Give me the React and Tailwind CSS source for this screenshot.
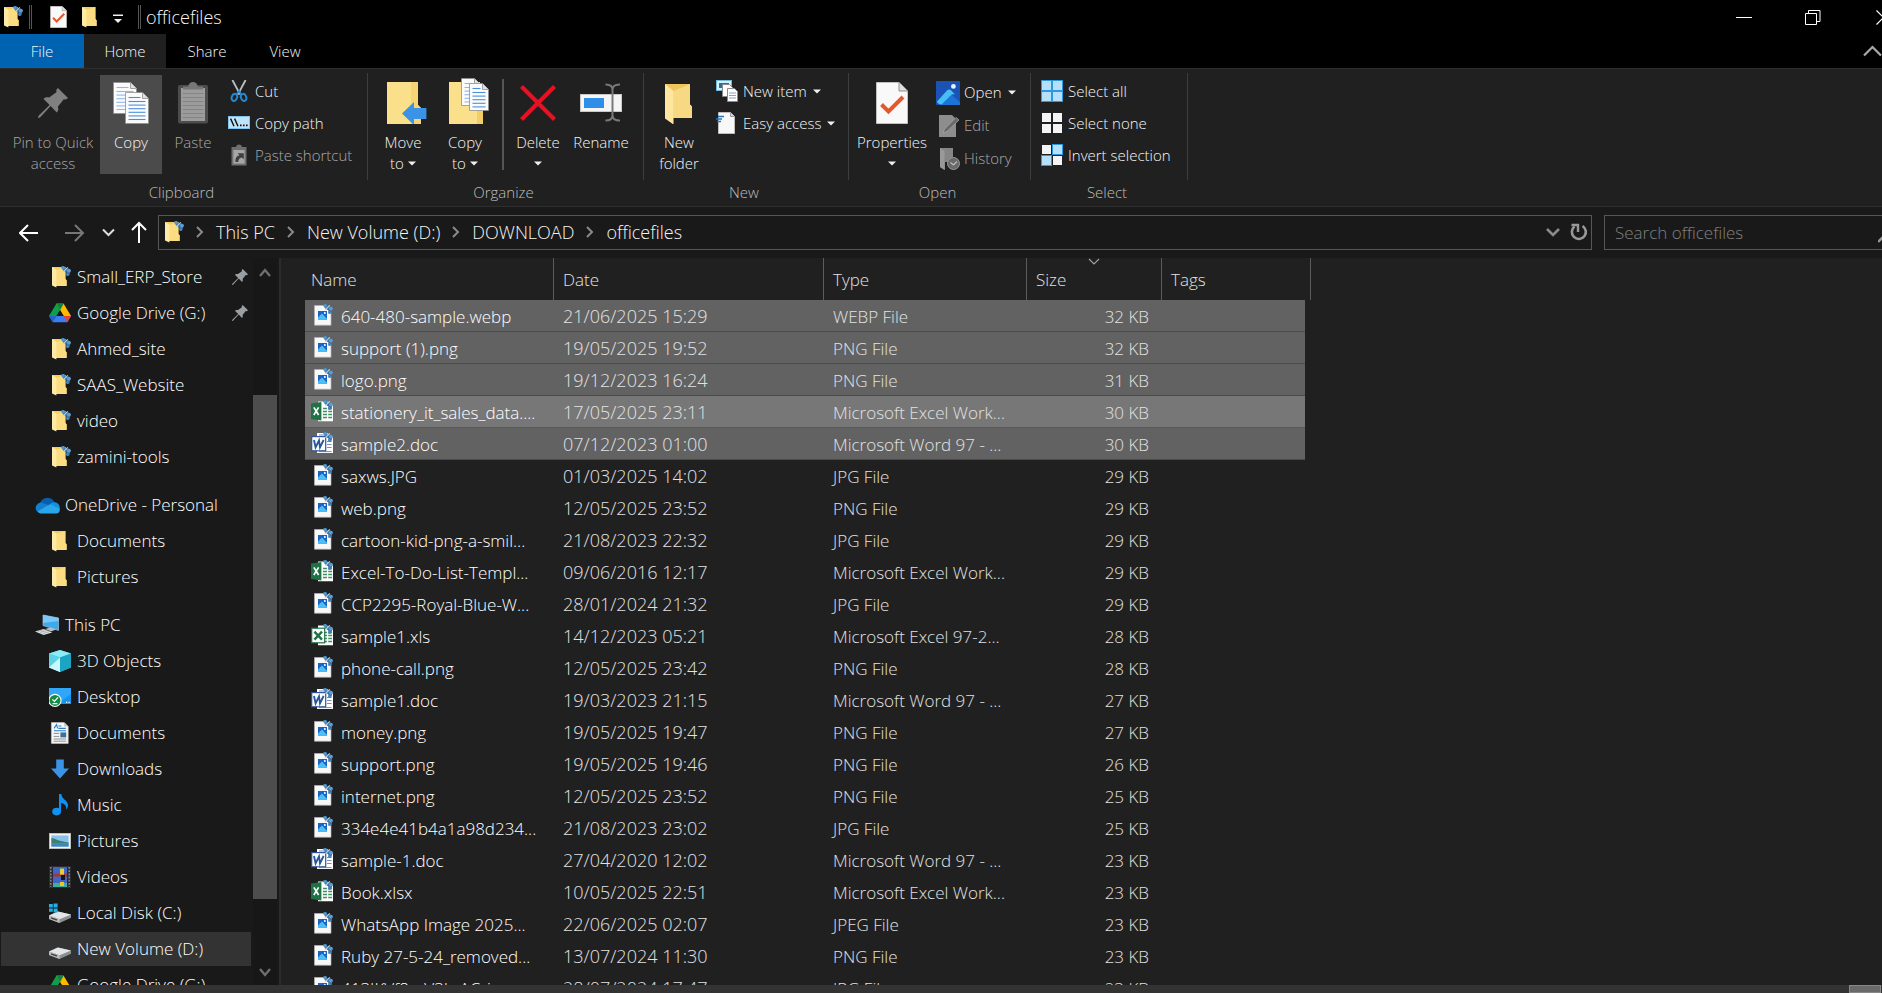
import React from "react";

/* ---------- icons ---------- */

function Svg({ w = 22, h = 22, vb, children, className = "" }) {
  return (
    <svg
      width={w}
      height={h}
      viewBox={vb || `0 0 ${w} ${h}`}
      fill="none"
      aria-hidden="true"
      className={`shrink-0 ${className}`}
    >
      {children}
    </svg>
  );
}

function Badge() {
  return (
    <g>
      <path d="M12 .6l3-.6 1.4 2.6 3.4 0 2 2-1.6 4.8-2.6-.4-.4-2.8-3-1.6z" fill="#3f6f9c" />
      <circle cx="14.2" cy="1.8" r="1.7" fill="#4f97cf" />
      <circle cx="19.9" cy="4.6" r="1.9" fill="#5b9fd6" />
      <circle cx="18.6" cy="8.4" r="1.5" fill="#4a86b8" />
      <path d="M14.4 5.6l4.4-4.2" stroke="#b9d6ec" strokeWidth="1.1" />
    </g>
  );
}

function Folder({ badge }) {
  return (
    <Svg>
      <path d="M3 1h13.4v12l1.2 1.2V20H7z" fill="#f3cd62" />
      <path d="M7 4l9.4-3v12l1.2 1.2V20H7z" fill="#fbdc80" />
      <path d="M3 1l4.4 2.6V21.6L3 19.4z" fill="#ffe9a6" />
      {badge && <Badge />}
    </Svg>
  );
}

function ImageFile() {
  return (
    <Svg>
      <path d="M3.5 1.5h10.2L20 7v14.2H3.5z" fill="#f8f8f8" stroke="#b4b4b4" strokeWidth=".7" />
      <rect x="7" y="7" width="9" height="8.6" fill="#1a62c4" />
      <path d="M7 13.4l4-3.8 5 5.2v.8H7z" fill="#4cc0f6" />
      <circle cx="13.8" cy="9" r="1" fill="#fff" />
      <Badge />
    </Svg>
  );
}

function ExcelFile({ old }) {
  return (
    <Svg>
      <path d="M7 1.5h9L22 5v16.2H7z" fill="#fff" />
      {[8, 11, 14, 17].map((y) => (
        <path key={y} d={`M12 ${y + 0.5}h4M17.2 ${y + 0.5}h3.8`} stroke="#3f8f60" strokeWidth="1.3" />
      ))}
      {old ? (
        <g>
          <rect x=".7" y="4.2" width="13" height="14.6" fill="#fff" stroke="#1f7244" strokeWidth="1.2" />
          <path d="M3.4 7.6l7.6 8M11 7.6l-7.6 8" stroke="#1f7244" strokeWidth="2.4" />
        </g>
      ) : (
        <g>
          <path d="M0 3.6L10.4 2v18.6L0 19z" fill="#1f7244" />
          <path d="M2.8 7.4l4.8 7.6M7.6 7.4l-4.8 7.6" stroke="#fff" strokeWidth="1.7" />
        </g>
      )}
      <Badge />
    </Svg>
  );
}

function WordFile() {
  return (
    <Svg>
      <path d="M6 1h10l6 4v16H6z" fill="#fff" />
      <path d="M8 3h6M16 9.5h4.6M16 12.5h4.6M16 15.5h4.6M8 19.6h12.6" stroke="#7d8fb5" strokeWidth="1" />
      <rect x=".7" y="4.6" width="14" height="14.2" fill="#fff" stroke="#2b569a" strokeWidth="1.2" />
      <path d="M3 8l1.6 7.4L8 8.4l1 7L12.6 8" stroke="#2b569a" strokeWidth="1.9" />
      <Badge />
    </Svg>
  );
}

function GoogleDrive() {
  return (
    <Svg vb="0 0 24 22">
      <path d="M8 1h8l-4 7-7.6 13L0 14.4z" fill="#0da04c" />
      <path d="M8 1h8l8 13.4h-8z" fill="#ffba00" />
      <path d="M8 1l4 7 4-7z" fill="#11833c" />
      <path d="M4 21l4-6.6h16L20 21z" fill="#3c7df0" />
      <path d="M16 14.4h8L20 21z" fill="#ea4335" />
      <path d="M0 14.4h8L4 21z" fill="#2460d8" />
      <path d="M12 8l4 6.4H8z" fill="#191919" />
    </Svg>
  );
}

function OneDrive() {
  return (
    <Svg w={25} h={17}>
      <path d="M5 6.5A7.6 7.6 0 0 1 18.6 4 6 6 0 0 1 20 6L9 12z" fill="#0a5cad" />
      <path d="M1 13a5.6 5.6 0 0 1 5-7.4L16 9l-8 6.5H4A5 5 0 0 1 1 13z" fill="#1180d3" />
      <path d="M14 8.4A6.5 6.5 0 0 1 20 5.3a5.6 5.6 0 0 1 4.6 7z" fill="#1591e0" />
      <path d="M2.4 14.6L13.6 8c2.4-1.4 4 .6 6 1.4l5 2.2c.8 2.8-1 4.9-3.4 4.9H5.6a5 5 0 0 1-3.2-1.9z" fill="#28a8ea" />
    </Svg>
  );
}

function ThisPC() {
  return (
    <Svg w={25} h={22}>
      <path d="M8 1l15.5 3v12.4L8 11.6z" fill="#3fa9f0" />
      <path d="M8 1l15.5 3v3L8 9z" fill="#7cc8f8" />
      <path d="M8 1l15.5 3v12.4L8 11.6z" stroke="#9fc4dc" strokeWidth=".7" />
      <path d="M10 15l6-1.4 5 2-5 2z" fill="#b8bcc0" />
      <path d="M0 17.4l8.6-2.4 8.6 3.4L8.6 21z" fill="#dcdfe2" />
      <path d="M2.4 17.4l6.6-1.6M5 18.4l7-1.8M7.6 19.6l6.4-1.8" stroke="#9aa0a6" strokeWidth=".7" />
    </Svg>
  );
}

function Cube() {
  return (
    <Svg>
      <path d="M11 0l11 3.4v14L11 22 0 17.4v-14z" fill="#36c6dd" />
      <path d="M11 0l11 3.4-11 4L0 3.4z" fill="#8eeaf4" />
      <path d="M0 3.4l11 4V22L0 17.4z" fill="#5bd3e4" />
      <path d="M0 17.4l11-10V22z" fill="#c9f7fb" />
      <path d="M22 3.4l-11 4V22l11-4.6z" fill="#1ba4c4" />
    </Svg>
  );
}

function Desktop() {
  return (
    <Svg>
      <rect x="0" y="2" width="22" height="16" fill="#1595f0" />
      <path d="M0 2h22v6L8 18H0z" fill="#2fa6f8" />
      <path d="M17 16.4h1.2M19.4 16.4h1.2" stroke="#fff" strokeWidth="1.2" />
      <circle cx="6" cy="14.4" r="6.6" fill="#fff" />
      <circle cx="6" cy="14.4" r="5.5" fill="#188a48" />
      <path d="M3.4 13.4l2 2 3.6-4M3.6 17.6h4.8" stroke="#fff" strokeWidth="1.2" />
    </Svg>
  );
}

function DocumentsIcon() {
  return (
    <Svg>
      <path d="M2.4.6h12.8l4 4v16.8H2.4z" fill="#f7f7f7" stroke="#c9c9c9" strokeWidth=".6" />
      <path d="M15.2.6v4h4z" fill="#c4c8cc" />
      <path d="M5 6.4L7.6 2.6 8.6 6.4M9.4 4h3M9.4 6.4h7.4M5 8.8h12" stroke="#2a7fc8" strokeWidth="1.1" />
      <rect x="11.4" y="10.4" width="5.8" height="5" fill="#38719e" />
      <path d="M4.6 11.4h5.6M4.6 14.4h5.6M4.6 17h12.6M4.6 19.2h12.6" stroke="#8e8e8e" strokeWidth="1" />
    </Svg>
  );
}

function DownloadArrow() {
  return (
    <Svg>
      <path d="M7.2 1.4h7.6v9.2H20L11 20.4 2 10.6h5.2z" fill="#3b93e6" />
    </Svg>
  );
}

function MusicNote() {
  return (
    <Svg>
      <ellipse cx="7.6" cy="17.6" rx="4.4" ry="3.8" fill="#1190f0" />
      <path d="M10 0h2.4c0 5 6.6 6.4 6.6 11 0 2-.6 3.4-1.6 4.6 0-4-1.6-5.8-5.4-6.6v9H10z" fill="#1190f0" />
    </Svg>
  );
}

function PicturesIcon() {
  return (
    <Svg>
      <rect x=".5" y="3.5" width="21" height="15" fill="#f4f4f4" stroke="#bdbdbd" />
      <rect x="2.4" y="5.4" width="17.2" height="11.2" fill="#8ac2ee" />
      <path d="M2.4 8c3 0 8 3.6 17.2 4.4v1.4H2.4z" fill="#3f7f6e" />
      <path d="M2.4 13.6h17.2v3H2.4z" fill="#3f86bd" />
    </Svg>
  );
}

function VideosIcon() {
  return (
    <Svg>
      <rect width="22" height="22" fill="#2b2b33" />
      <rect x="4" y="1" width="14" height="20" fill="#3f66c6" />
      <rect x="4" y="7.6" width="14" height="3" fill="#a33636" />
      <rect x="11" y="2.6" width="4" height="6" fill="#e8cf2e" />
      <rect x="4" y="17" width="14" height="4" fill="#3fae9a" />
      <rect x="11" y="16" width="4" height="4" fill="#f3c223" />
      <rect x="12" y="9" width="4" height="5" fill="#16161d" />
      <path d="M1.8 1v20M20.2 1v20" stroke="#8d8d94" strokeWidth="1.4" strokeDasharray="1.8 1.4" />
    </Svg>
  );
}

function Disk({ win }) {
  return (
    <Svg>
      <path d="M0 13.6l8.6-4.2L22 12.4v3.4L10.6 21 0 17z" fill="#8d8f91" />
      <path d="M0 13.4l9-4 13 3-11.4 4.8z" fill="#e4e5e6" />
      <path d="M0 13.4l10.6 3.8V21L0 17z" fill="#b9bbbd" />
      <path d="M2 15.8l6 2.2" stroke="#454545" strokeWidth="1.4" />
      {win && (
        <path d="M0 2h3.8v3.4H0zM4.6 1.4h4v4h-4zM0 6.4h3.8v3.4H0zM4.6 6.4h4v4h-4z" fill="#22b0e6" />
      )}
    </Svg>
  );
}

function Pin({ size = 16, color = "#9a9fa3" }) {
  return (
    <Svg w={size} h={size} vb="0 0 30 30">
      <path
        d="M20 0l10 10-2.2 1.6-2-.4-6 7.6c1 2.2.6 4-1 5.6L12.6 18 2 29.6.4 30 0 29.4l.6-1.6L11.6 17 5.4 10.8c1.6-1.6 3.6-2 5.8-1.2L18.6 4 18.2 2z"
        fill={color}
      />
    </Svg>
  );
}

function Page({ x, y, w, h, line = "#4b8fdc" }) {
  const rows = [];
  for (let i = y + 9; i < y + h - 3; i += 3.6) rows.push(i);
  return (
    <g>
      <path d={`M${x} ${y}h${w - 6}l6 6v${h - 6}h-${w}z`} fill="#fbfbfb" stroke="#8f8f8f" strokeWidth=".8" />
      <path d={`M${x + w - 6} ${y}v6h6`} fill="#e0e0e0" stroke="#8f8f8f" strokeWidth=".8" />
      {rows.map((r) => (
        <path key={r} d={`M${x + 3} ${r}h${w - 6}`} stroke={line} strokeWidth="1.1" />
      ))}
      <path d={`M${x + 3} ${y + 5}h${w - 11}`} stroke={line} strokeWidth="1.1" />
    </g>
  );
}

function CopyBig() {
  return (
    <Svg w={36} h={42}>
      <Page x={0.5} y={0.5} w={23} h={31} line="#8fb8ea" />
      <Page x={12.5} y={10.5} w={23} h={31} />
    </Svg>
  );
}

function PasteBig() {
  return (
    <Svg w={32} h={42}>
      <rect x="1" y="3" width="30" height="38.5" rx="2" fill="#4d4d4d" />
      <rect x="4" y="6" width="24" height="33" fill="#9c9c9c" />
      <path d="M6 7.4V4.6h5.4a4.6 4.6 0 0 1 9.2 0H26v2.8z" fill="#777" />
      {[11, 15, 19, 23, 27, 31, 35].map((y) => (
        <path key={y} d={`M5.5 ${y + 0.5}h21`} stroke="#848484" />
      ))}
    </Svg>
  );
}

function Scissors() {
  return (
    <Svg>
      <path d="M4.4 0l7.8 14.6M17.6 0L9.8 14.6" stroke="#b8bcc0" strokeWidth="1.9" />
      <ellipse cx="6.4" cy="17.4" rx="2.6" ry="3.6" transform="rotate(22 6.4 17.4)" stroke="#2689cf" strokeWidth="2" />
      <ellipse cx="15.6" cy="17.4" rx="2.6" ry="3.6" transform="rotate(-22 15.6 17.4)" stroke="#2689cf" strokeWidth="2" />
      <path d="M8.6 14.4L11 11l2.4 3.4" stroke="#2689cf" strokeWidth="1.8" />
    </Svg>
  );
}

function CopyPath() {
  return (
    <Svg>
      <rect x=".5" y="4.5" width="21" height="12" fill="#bfe3fb" stroke="#7fc3ee" />
      <path d="M2.6 6.6l3.4 7.6M6.6 6.6l3.4 7.6" stroke="#111" strokeWidth="1.4" />
      <path d="M12 13.4h1.6M15 13.4h1.6M18 13.4h1.6" stroke="#111" strokeWidth="1.6" />
    </Svg>
  );
}

function PasteShortcut() {
  return (
    <Svg>
      <path d="M3.5 3h4.4a3.2 3.2 0 0 1 6.2 0h4.4v18.4h-15z" fill="#6f6f6f" />
      <rect x="5.4" y="6" width="11.2" height="13.6" fill="#a6a6a6" />
      <path d="M7.4 18c0-4 1-6 4-6.4l-1.6-2.4h6v6l-2-1.8c-2 .4-3.4 1.6-3.6 4.6z" fill="#3f3f3f" />
    </Svg>
  );
}

function MoveTo() {
  return (
    <Svg w={40} h={42}>
      <path d="M0 0h31v23l3 3v16H0z" fill="#fbe08c" />
      <path d="M24 0h7v23l3 3v16H24z" fill="#f6d373" />
      <path d="M15 31.5L27 20v6h12.4v11H27v6z" fill="#3b93e6" />
    </Svg>
  );
}

function CopyTo() {
  return (
    <Svg w={40} h={46}>
      <path d="M0 4h31v23l3 3v16H0z" fill="#fbe08c" />
      <path d="M28 33h6v13h-6z" fill="#f3cd66" />
      <Page x={12.5} y={0.5} w={19} h={27} line="#8fb8ea" />
      <Page x={20.5} y={5.5} w={19} h={27} />
    </Svg>
  );
}

function DeleteX() {
  return (
    <Svg w={36} h={42}>
      <path d="M1.5 4.5l33 33M34.5 4.5l-33 33" stroke="#e81123" strokeWidth="4.2" />
    </Svg>
  );
}

function RenameIcon() {
  return (
    <Svg w={42} h={42}>
      <rect x=".5" y="12.5" width="41" height="17" fill="#f5f5f5" stroke="#c8c8c8" />
      <rect x="4" y="16" width="20" height="10" fill="#2f8fe6" />
      <path d="M25.5 2.5c4.6 0 7 1.5 7 5v26c0 3.5-2.4 5-7 5M40 2.5c-5 0-7.5 1.5-7.5 5M40 38.5c-5 0-7.5-1.5-7.5-5" stroke="#7a7a7a" strokeWidth="2" />
    </Svg>
  );
}

function NewFolderBig() {
  return (
    <Svg w={28} h={42}>
      <path d="M0 2h25v20.5l2 2V36H7z" fill="#eec45c" />
      <path d="M8.5 9L25 2v20.5l2 2V36H8.5z" fill="#f8d983" />
      <path d="M0 2l8.5 7v33.5L0 36.5z" fill="#ffe6a0" />
    </Svg>
  );
}

function NewItem() {
  return (
    <Svg>
      <rect x=".5" y=".5" width="15" height="10" fill="#d6f0fb" stroke="#6fb9de" />
      <rect x="3" y="3" width="10" height="5" fill="#2f6f92" />
      <path d="M6.5 4.5h7l3 3v9h-10z" fill="#fff" stroke="#8a8a8a" />
      <path d="M11.5 8.5h7l3 3v10h-10z" fill="#fff" stroke="#8a8a8a" />
      <path d="M13 13h7M13 15.5h7M13 18h7" stroke="#8ba3c4" />
    </Svg>
  );
}

function EasyAccess() {
  return (
    <Svg>
      <path d="M2.5.5h12l4 4v17h-16z" fill="#f8f8f8" stroke="#bdbdbd" />
      <path d="M14.5.5v4h4" fill="#d8d8d8" stroke="#999" />
      <path d="M2 4.5h6M0 7h6M1 9.5h4" stroke="#2473b8" strokeWidth="1.3" />
    </Svg>
  );
}

function PropertiesIcon({ w = 32, h = 42 }) {
  return (
    <Svg w={w} h={h} vb="0 0 32 42">
      <path d="M.5.5H23l8.5 8.5v32.5H.5z" fill="#f9f9f9" stroke="#c0c0c0" />
      <path d="M23 .5V9h8.5" fill="#dedede" stroke="#8f8f8f" />
      <path d="M5.500 22.500l7 7L27 15" stroke="#e4592a" strokeWidth="4" />
    </Svg>
  );
}

function PhotosIcon() {
  return (
    <Svg w={24} h={24}>
      <rect width="24" height="24" rx="1" fill="#1b53b4" />
      <path d="M3 24L14 12l10 9.500V24z" fill="#1c74d8" />
      <path d="M1 20.500L11 9.500c1.600-1.600 3-1 4.200 0l4.200 4.200c-2-.8-3.600-.4-5 1L6 23c-2 .8-5-.5-5-2.500z" fill="#45bff5" />
      <circle cx="17.400" cy="5.400" r="2.400" fill="#e8f6ff" />
    </Svg>
  );
}

function EditIcon() {
  return (
    <Svg w={24} h={24}>
      <path d="M3 1h13l4 4v18H3z" fill="#8d8d8d" />
      <path d="M7 19l1.500-4L20 3.500l3 2.500-12 11.500z" fill="#6a6a6a" stroke="#a5a5a5" strokeWidth=".8" />
    </Svg>
  );
}

function HistoryIcon() {
  return (
    <Svg w={24} h={24}>
      <path d="M4 1h13v14H9v8l-5-3z" fill="#858585" />
      <path d="M4 1l4.500 3v19L4 20z" fill="#999" />
      <circle cx="17.500" cy="16.500" r="6" fill="#6a6a6a" stroke="#989898" />
      <path d="M14.500 15.500l3 2.500 3.500-3.500" stroke="#bdbdbd" strokeWidth="1.200" />
    </Svg>
  );
}

function Grid4({ blues }) {
  const cells = [
    [0, 0],
    [1, 0],
    [0, 1],
    [1, 1],
  ];
  return (
    <Svg>
      {cells.map(([cx, cy], i) =>
        blues[i] ? (
          <rect key={i} x={cx * 11 + 0.5} y={cy * 11 + 0.5} width="10" height="10" fill="#b5e0fb" stroke="#2f97de" />
        ) : (
          <rect key={i} x={cx * 11 + 1} y={cy * 11 + 1} width="9" height="9" fill="#f4f4f4" />
        )
      )}
    </Svg>
  );
}

function Caret() {
  return (
    <svg width="8" height="5" viewBox="0 0 8 5" aria-hidden="true" className="shrink-0">
      <path d="M0 .5h8L4 4.5z" fill="#f0f0f0" />
    </svg>
  );
}

function Chevron({ w, h, d, color = "#8a8a8a", sw = 2 }) {
  return (
    <Svg w={w} h={h}>
      <path d={d} stroke={color} strokeWidth={sw} />
    </Svg>
  );
}

/* ---------- ribbon ---------- */

function BigButton({ icon, lines, caret, disabled, active, width, iconPad = "" }) {
  return (
    <button
      type="button"
      disabled={disabled}
      className={`flex h-[99px] shrink-0 flex-col items-center whitespace-nowrap pt-[7px] ${width} ${
        active ? "bg-[#4b4b4b]" : ""
      } ${disabled ? "text-[#a9a9a9]" : "text-[#f5f5f5]"}`}
    >
      <span className={`flex h-[42px] items-end justify-center ${iconPad}`}>{icon}</span>
      <span className="mt-2 block">{lines[0]}</span>
      {(lines[1] || caret) && (
        <span className="flex h-[21px] items-center justify-center gap-1">
          {lines[1]}
          {caret && <Caret />}
        </span>
      )}
    </button>
  );
}

function SmallButton({ icon, label, caret, disabled, tall }) {
  return (
    <button
      type="button"
      disabled={disabled}
      className={`flex items-center gap-1 whitespace-nowrap ${tall ? "h-[33px]" : "h-8"} ${
        disabled ? "text-[#a9a9a9]" : "text-[#f5f5f5]"
      }`}
    >
      <span className="flex w-6 shrink-0 justify-center">{icon}</span>
      <span>{label}</span>
      {caret && (
        <span className="pl-[2px]">
          <Caret />
        </span>
      )}
    </button>
  );
}

function Group({ label, width, children }) {
  return (
    <section aria-label={label} className={`flex h-full shrink-0 ${width}`}>
      <div className="flex min-w-0 flex-1 flex-col">
        <div className="flex h-[113px] pt-[6px]">{children}</div>
        <div className="pr-1 text-center text-[#bdbdbd]">{label}</div>
      </div>
      <div className="mt-1 h-[107px] w-px shrink-0 bg-[#3d3d3d]" />
    </section>
  );
}

function Ribbon() {
  return (
    <div className="flex h-[139px] shrink-0 overflow-hidden border-y border-[#2e2e2e] bg-[#202020] text-[15px] leading-[21px]">
      <Group label="Clipboard" width="w-[368px]">
        <div className="flex gap-[2px] pl-2">
          <BigButton
            width="w-[90px]"
            disabled
            icon={
              <span className="pb-[6px]">
                <Pin size={30} color="#808080" />
              </span>
            }
            lines={["Pin to Quick", "access"]}
          />
          <BigButton width="w-[62px]" active icon={<CopyBig />} lines={["Copy"]} />
          <BigButton width="w-[58px]" disabled icon={<PasteBig />} lines={["Paste"]} />
        </div>
        <div className="pl-[5px]">
          <SmallButton icon={<Scissors />} label="Cut" />
          <SmallButton icon={<CopyPath />} label="Copy path" />
          <SmallButton icon={<PasteShortcut />} label="Paste shortcut" disabled />
        </div>
      </Group>

      <Group label="Organize" width="w-[276px]">
        <div className="flex pl-1">
          <BigButton width="w-[62px]" iconPad="pl-2" icon={<MoveTo />} lines={["Move", "to"]} caret />
          <BigButton width="w-[62px]" iconPad="pl-2" icon={<CopyTo />} lines={["Copy", "to"]} caret />
          <div className="ml-[6px] mr-[3px] mt-1 h-[91px] w-[2px] bg-[#555]" />
          <BigButton width="w-[62px]" icon={<DeleteX />} lines={["Delete"]} caret />
          <BigButton width="w-16" icon={<RenameIcon />} lines={["Rename"]} />
        </div>
      </Group>

      <Group label="New" width="w-[205px]">
        <div className="flex pl-1">
          <BigButton width="w-[62px]" icon={<NewFolderBig />} lines={["New", "folder"]} />
        </div>
        <div className="pl-[5px]">
          <SmallButton icon={<NewItem />} label="New item" caret />
          <SmallButton icon={<EasyAccess />} label="Easy access" caret />
        </div>
      </Group>

      <Group label="Open" width="w-[182px]">
        <div className="flex pl-1">
          <BigButton width="w-[78px]" icon={<PropertiesIcon />} lines={["Properties"]} caret />
        </div>
        <div className="pl-[5px] pt-px">
          <SmallButton tall icon={<PhotosIcon />} label="Open" caret />
          <SmallButton tall icon={<EditIcon />} label="Edit" disabled />
          <SmallButton tall icon={<HistoryIcon />} label="History" disabled />
        </div>
      </Group>

      <Group label="Select" width="w-[157px]">
        <div className="pl-[9px]">
          <SmallButton icon={<Grid4 blues={[1, 1, 1, 1]} />} label="Select all" />
          <SmallButton icon={<Grid4 blues={[0, 0, 0, 0]} />} label="Select none" />
          <SmallButton icon={<Grid4 blues={[0, 1, 1, 0]} />} label="Invert selection" />
        </div>
      </Group>
    </div>
  );
}

/* ---------- top bars ---------- */

function TitleBar() {
  return (
    <header className="flex h-[34px] shrink-0 items-center overflow-hidden bg-black">
      <div className="flex items-center pl-px">
        <Folder badge />
        <div className="ml-[6px] mr-3 h-6 w-[3px] border-x border-[#555]" />
        <button type="button" aria-label="Properties" className="w-7 px-[6px]">
          <PropertiesIcon w={17} h={22} />
        </button>
        <button type="button" aria-label="New folder" className="ml-[7px]">
          <Folder />
        </button>
        <button type="button" aria-label="Customize Quick Access Toolbar" className="ml-3 mr-[15px] pt-1">
          <svg width="10" height="10" viewBox="0 0 10 10" aria-hidden="true">
            <path d="M0 .5h10v1.5H0zM1 5h8L5 9z" fill="#f0f0f0" />
          </svg>
        </button>
        <div className="mr-[5px] h-6 w-[3px] border-x border-[#555]" />
        <h1 className="text-[18px] leading-6 text-[#f5f5f5]">officefiles</h1>
      </div>
      <div className="ml-auto flex h-full shrink-0 items-center">
        <button type="button" aria-label="Minimize" className="mr-[53px]">
          <Svg w={16} h={15}>
            <path d="M0 7.5h16" stroke="#fff" />
          </Svg>
        </button>
        <button type="button" aria-label="Restore" className="mr-[55px]">
          <Svg w={16} h={15}>
            <path d="M.5 3.5h11v11h-11zM3.5 3.5v-3h11.500v11h-3.500" stroke="#fff" />
          </Svg>
        </button>
        <button type="button" aria-label="Close">
          <Svg w={6} h={15}>
            <path d="M.5.5l14 14M.5 14.500l14-14" stroke="#fff" strokeWidth="1.200" />
          </Svg>
        </button>
      </div>
    </header>
  );
}

function Tabs() {
  return (
    <nav className="flex h-[34px] shrink-0 bg-black text-[15px] text-[#f5f5f5]">
      <button type="button" className="w-[84px] bg-[#0063b1]">File</button>
      <button type="button" className="w-[82px] bg-[#202020]">Home</button>
      <button type="button" className="w-[82px]">Share</button>
      <button type="button" className="w-[74px]">View</button>
      <button type="button" aria-label="Collapse ribbon" className="ml-auto">
        <Chevron w={19} h={12} d="M1 10.5l8.5-8.5 8.5 8.5" color="#a8a8a8" sw={2.2} />
      </button>
    </nav>
  );
}

function Crumb({ label }) {
  return (
    <li className="flex items-center whitespace-nowrap">
      <Chevron w={8} h={12} d="M1 1l5 5-5 5" />
      <a href="#path" className="px-3">
        {label}
      </a>
    </li>
  );
}

function AddressRow() {
  return (
    <div className="flex h-[51px] shrink-0 items-center bg-[#191919] text-[18px] leading-6 text-[#f5f5f5]">
      <div className="flex w-[158px] shrink-0 items-center pl-[19px]">
        <button type="button" aria-label="Back">
          <Svg w={20} h={20}>
            <path d="M1 10h18M9 2L1 10l8 8" stroke="#fff" strokeWidth="2" />
          </Svg>
        </button>
        <button type="button" aria-label="Forward" className="ml-[26px]">
          <Svg w={20} h={20}>
            <path d="M0 10h18M10 2l8 8-8 8" stroke="#777" strokeWidth="2" />
          </Svg>
        </button>
        <button type="button" aria-label="Recent locations" className="ml-[17px]">
          <Chevron w={13} h={9} d="M1 1.5l5.500 5.500L12 1.500" color="#ddd" />
        </button>
        <button type="button" aria-label="Up" className="ml-4">
          <Svg w={16} h={24}>
            <path d="M8 2v20M1 9l7-7 7 7" stroke="#fff" strokeWidth="2" />
          </Svg>
        </button>
      </div>
      <div className="flex h-[35px] min-w-0 flex-1 items-center border border-[#565656] pb-[2px] pl-[3px]">
        <Folder badge />
        <ol className="flex pl-3">
          <Crumb label="This PC" />
          <Crumb label="New Volume (D:)" />
          <Crumb label="DOWNLOAD" />
          <Crumb label="officefiles" />
        </ol>
        <button type="button" aria-label="Previous locations" className="ml-auto">
          <Chevron w={14} h={10} d="M1 2l6 6 6-6" sw={2.6} />
        </button>
        <button type="button" aria-label="Refresh" className="ml-[10px] mr-[3px]">
          <Svg w={18} h={18}>
            <path d="M12.500 3a7 7 0 1 1-8 .5" stroke="#999" strokeWidth="2.600" />
            <path d="M1.500 2h6.500v7" stroke="#999" strokeWidth="2.400" />
          </Svg>
        </button>
      </div>
      <div className="ml-3 flex h-[35px] w-[278px] shrink-0 items-center border border-r-0 border-[#565656]">
        <input
          type="text"
          aria-label="Search officefiles"
          placeholder="Search officefiles"
          className="min-w-0 flex-1 bg-transparent pl-[10px] text-[17px] outline-none placeholder:text-[#808080]"
        />
        <Svg w={4} h={10} className="mt-3">
          <path d="M0 8l6-6" stroke="#999" strokeWidth="2.400" />
        </Svg>
      </div>
    </div>
  );
}

/* ---------- navigation pane ---------- */

const navItems = [
  { label: "Small_ERP_Store", icon: <Folder badge />, pin: true },
  { label: "Google Drive (G:)", icon: <GoogleDrive />, pin: true },
  { label: "Ahmed_site", icon: <Folder badge /> },
  { label: "SAAS_Website", icon: <Folder badge /> },
  { label: "video", icon: <Folder badge /> },
  { label: "zamini-tools", icon: <Folder badge /> },
  { label: "OneDrive - Personal", icon: <OneDrive />, root: true },
  { label: "Documents", icon: <Folder /> },
  { label: "Pictures", icon: <Folder /> },
  { label: "This PC", icon: <ThisPC />, root: true },
  { label: "3D Objects", icon: <Cube /> },
  { label: "Desktop", icon: <Desktop /> },
  { label: "Documents", icon: <DocumentsIcon /> },
  { label: "Downloads", icon: <DownloadArrow /> },
  { label: "Music", icon: <MusicNote /> },
  { label: "Pictures", icon: <PicturesIcon /> },
  { label: "Videos", icon: <VideosIcon /> },
  { label: "Local Disk (C:)", icon: <Disk win /> },
  { label: "New Volume (D:)", icon: <Disk />, selected: true },
  { label: "Google Drive (G:)", icon: <GoogleDrive /> },
];

function NavPane() {
  return (
    <aside className="flex w-[281px] shrink-0 border-r-2 border-[#2b2b2b] bg-[#191919]">
      <ul className="min-w-0 flex-1 overflow-hidden pl-px pt-px">
        {navItems.map((it, i) => (
          <li key={i} className={it.root ? "mt-3" : ""}>
            <a
              href="#folder"
              className={`flex h-9 items-center whitespace-nowrap border-y border-[#191919] pr-[3px] ${
                it.root ? "pl-[34px]" : "pl-12"
              } ${it.selected ? "bg-[#333]" : ""}`}
            >
              {it.icon}
              <span className={it.root ? "pl-[5px]" : "pl-[6px]"}>{it.label}</span>
              {it.pin && (
                <span className="ml-auto">
                  <Pin />
                </span>
              )}
            </a>
          </li>
        ))}
      </ul>
      <div className="ml-[2px] mr-[2px] flex w-6 shrink-0 flex-col items-center bg-[#171717]">
        <div className="flex h-[137px] shrink-0 pt-[10px]">
          <Chevron w={12} h={9} d="M1 8l5-6 5 6" color="#6e6e6e" sw={2.4} />
        </div>
        <div className="w-full flex-1 bg-[#4d4d4d]" />
        <div className="flex h-[86px] shrink-0 items-end pb-2">
          <Chevron w={12} h={9} d="M1 1l5 6 5-6" color="#6e6e6e" sw={2.4} />
        </div>
      </div>
    </aside>
  );
}

/* ---------- file list ---------- */

const files = [
  ["img", "640-480-sample.webp", "21/06/2025 15:29", "WEBP File", "32 KB", 1],
  ["img", "support (1).png", "19/05/2025 19:52", "PNG File", "32 KB", 1],
  ["img", "logo.png", "19/12/2023 16:24", "PNG File", "31 KB", 1],
  ["xlsx", "stationery_it_sales_data....", "17/05/2025 23:11", "Microsoft Excel Work...", "30 KB", 2],
  ["doc", "sample2.doc", "07/12/2023 01:00", "Microsoft Word 97 - ...", "30 KB", 1],
  ["img", "saxws.JPG", "01/03/2025 14:02", "JPG File", "29 KB"],
  ["img", "web.png", "12/05/2025 23:52", "PNG File", "29 KB"],
  ["img", "cartoon-kid-png-a-smil...", "21/08/2023 22:32", "JPG File", "29 KB"],
  ["xlsx", "Excel-To-Do-List-Templ...", "09/06/2016 12:17", "Microsoft Excel Work...", "29 KB"],
  ["img", "CCP2295-Royal-Blue-W...", "28/01/2024 21:32", "JPG File", "29 KB"],
  ["xls", "sample1.xls", "14/12/2023 05:21", "Microsoft Excel 97-2...", "28 KB"],
  ["img", "phone-call.png", "12/05/2025 23:42", "PNG File", "28 KB"],
  ["doc", "sample1.doc", "19/03/2023 21:15", "Microsoft Word 97 - ...", "27 KB"],
  ["img", "money.png", "19/05/2025 19:47", "PNG File", "27 KB"],
  ["img", "support.png", "19/05/2025 19:46", "PNG File", "26 KB"],
  ["img", "internet.png", "12/05/2025 23:52", "PNG File", "25 KB"],
  ["img", "334e4e41b4a1a98d234...", "21/08/2023 23:02", "JPG File", "25 KB"],
  ["doc", "sample-1.doc", "27/04/2020 12:02", "Microsoft Word 97 - ...", "23 KB"],
  ["xlsx", "Book.xlsx", "10/05/2025 22:51", "Microsoft Excel Work...", "23 KB"],
  ["img", "WhatsApp Image 2025...", "22/06/2025 02:07", "JPEG File", "23 KB"],
  ["img", "Ruby 27-5-24_removed...", "13/07/2024 11:30", "PNG File", "23 KB"],
  ["img", "413IKVf8_xV3L_ACri...", "28/07/2024 17:47", "JPG File", "23 KB"],
];

const fileIcons = {
  img: <ImageFile />,
  xlsx: <ExcelFile />,
  xls: <ExcelFile old />,
  doc: <WordFile />,
};

const rowTone = {
  0: "border-transparent",
  1: "border-[#4c4c4c] bg-[#626262]",
  2: "border-[#5a5a5a] bg-[#777777]",
};

function FileList() {
  const th = "h-[42px] border-r border-[#5c5c5c] p-0 pt-[2px] text-left font-light text-[#e2e2e2]";
  return (
    <main className="min-w-0 flex-1 overflow-hidden bg-[#202020] pl-6">
      <table className="w-[1006px] table-fixed border-separate border-spacing-0 whitespace-nowrap">
        <colgroup>
          <col className="w-[249px]" />
          <col className="w-[270px]" />
          <col className="w-[203px]" />
          <col className="w-[135px]" />
          <col className="w-[143px]" />
          <col className="w-[6px]" />
        </colgroup>
        <thead>
          <tr>
            <th className={th}>
              <span className="pl-[6px]">Name</span>
            </th>
            <th className={th}>
              <span className="pl-[9px]">Date</span>
            </th>
            <th className={th}>
              <span className="pl-[9px]">Type</span>
            </th>
            <th className={`relative ${th}`}>
              <span className="pl-[9px]">Size</span>
              <span className="absolute inset-x-0 top-0 flex justify-center">
                <Chevron w={12} h={8} d="M1 1l5 5 5-5" color="#a0a0a0" sw={1.2} />
              </span>
            </th>
            <th colSpan={2} className={th}>
              <span className="pl-[9px]">Tags</span>
            </th>
          </tr>
        </thead>
        <tbody>
          {files.map(([kind, name, date, type, size, sel = 0]) => {
            const td = `h-8 border-b p-0 pt-[2px] ${rowTone[sel]}`;
            return (
              <tr key={name} className="text-[#e2e2e2]">
                <td className={td}>
                  <div className="flex items-center pl-[6px] text-white">
                    <span className="pb-1">{fileIcons[kind]}</span>
                    <span className="pl-2">{name}</span>
                  </div>
                </td>
                <td className={td}>
                  <span className="pl-[9px] text-[18px]">{date}</span>
                </td>
                <td className={td}>
                  <span className="pl-[9px]">{type}</span>
                </td>
                <td className={`text-right ${td}`}>
                  <span className="pr-[13px]">{size}</span>
                </td>
                <td className={td} />
                <td />
              </tr>
            );
          })}
        </tbody>
      </table>
    </main>
  );
}

export default function App() {
  return (
    <div className="flex h-screen flex-col overflow-hidden bg-[#202020] font-['Open_Sans',sans-serif] font-light">
      <TitleBar />
      <Tabs />
      <Ribbon />
      <AddressRow />
      <div className="flex min-h-0 flex-1 overflow-hidden text-[17px] leading-6 text-white">
        <NavPane />
        <FileList />
      </div>
      <footer className="flex h-2 shrink-0 justify-end bg-[#333] pr-px">
        <div className="w-8 border border-[#888] bg-[#6a6a6a]" />
      </footer>
    </div>
  );
}
